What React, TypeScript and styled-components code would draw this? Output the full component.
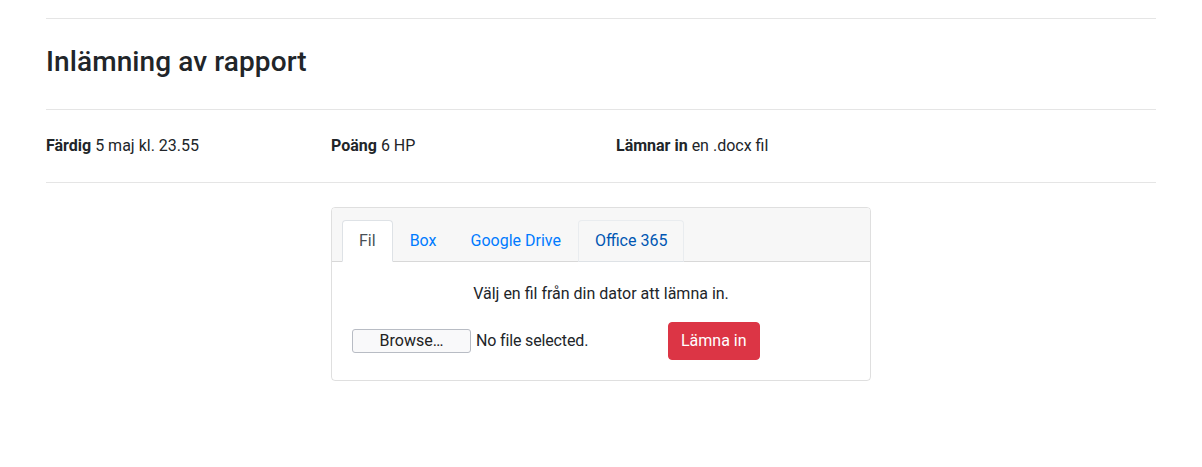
import React from "react"
import styled, { createGlobalStyle } from "styled-components"

const GlobalStyle = createGlobalStyle`
  body {
    margin: 0;
    background: #fff;
    font-family: Roboto, "Liberation Sans", sans-serif;
    font-size: 16px;
    line-height: 1.5;
    color: #212529;
  }
`

const Container = styled.div`
  max-width: 1110px;
  margin: 0 auto;
  padding: 18px 15px 0;
`

const Rule = styled.hr`
  margin: 0;
  border: 0;
  border-top: 1px solid rgba(0, 0, 0, 0.1);
`

const Title = styled.h3`
  margin: 0;
  padding: 26px 0 30px;
  font-size: 28px;
  font-weight: 500;
  line-height: 1.2;
  letter-spacing: 0.1px;
`

const InfoRow = styled.div`
  display: grid;
  grid-template-columns: repeat(4, 285px);
  padding: 24px 0;
`

const Info = styled.div`
  b {
    font-weight: 700;
  }
`

const CardRow = styled.div`
  display: flex;
  justify-content: center;
  padding-top: 24px;
`

const Card = styled.div`
  width: 538px;
  border: 1px solid rgba(0, 0, 0, 0.125);
  border-radius: 4px;
  overflow: hidden;
`

const CardHeader = styled.div`
  background: #f7f7f7;
  border-bottom: 1px solid rgba(0, 0, 0, 0.125);
  padding: 12px 10px 0;
`

const Tabs = styled.ul`
  display: flex;
  margin: 0 0 -1px;
  padding: 0;
  list-style: none;
`

const Tab = styled.li<{ $state?: "active" | "hover" }>`
  padding: 8px 16px;
  border: 1px solid transparent;
  border-top-left-radius: 4px;
  border-top-right-radius: 4px;
  color: #007bff;
  ${(p) =>
    p.$state === "active" &&
    `
    color: #495057;
    background: #fff;
    border-color: #dee2e6 #dee2e6 #fff;
  `}
  ${(p) =>
    p.$state === "hover" &&
    `
    color: #0056b3;
    border-color: #e9ecef #e9ecef #dee2e6;
  `}
`

const CardBody = styled.div`
  padding: 20px;
`

const Lead = styled.p`
  margin: 0 0 16px;
  text-align: center;
`

const FormRow = styled.div`
  display: flex;
  align-items: center;
`

const FileInput = styled.div`
  width: 316px;
  display: flex;
  align-items: center;
  gap: 5px;
`

const BrowseButton = styled.button`
  width: 119px;
  height: 24px;
  padding: 0;
  border: 1px solid #b8bcc4;
  border-radius: 3px;
  background: #f9f9fa;
  font-family: inherit;
  font-size: 16px;
  line-height: 20px;
  color: #222;
`

const FileStatus = styled.span`
  letter-spacing: -0.15px;
`

const SubmitButton = styled.button`
  height: 38px;
  padding: 6px 12px;
  border: 1px solid #dc3545;
  border-radius: 4px;
  background: #dc3545;
  color: #fff;
  font-family: inherit;
  font-size: 16px;
  line-height: 24px;
`

export default function App() {
  return (
    <>
      <GlobalStyle />
      <Container>
        <Rule />
        <Title>Inlämning av rapport</Title>
        <Rule />
        <InfoRow>
          <Info>
            <b>Färdig</b> 5 maj kl. 23.55
          </Info>
          <Info>
            <b>Poäng</b> 6 HP
          </Info>
          <Info>
            <b>Lämnar in</b> en .docx fil
          </Info>
        </InfoRow>
        <Rule />
        <CardRow>
          <Card>
            <CardHeader>
              <Tabs>
                <Tab $state="active">Fil</Tab>
                <Tab>Box</Tab>
                <Tab>Google Drive</Tab>
                <Tab $state="hover">Office 365</Tab>
              </Tabs>
            </CardHeader>
            <CardBody>
              <Lead>Välj en fil från din dator att lämna in.</Lead>
              <FormRow>
                <FileInput>
                  <BrowseButton>Browse…</BrowseButton>
                  <FileStatus>No file selected.</FileStatus>
                </FileInput>
                <SubmitButton>Lämna in</SubmitButton>
              </FormRow>
            </CardBody>
          </Card>
        </CardRow>
      </Container>
    </>
  )
}
